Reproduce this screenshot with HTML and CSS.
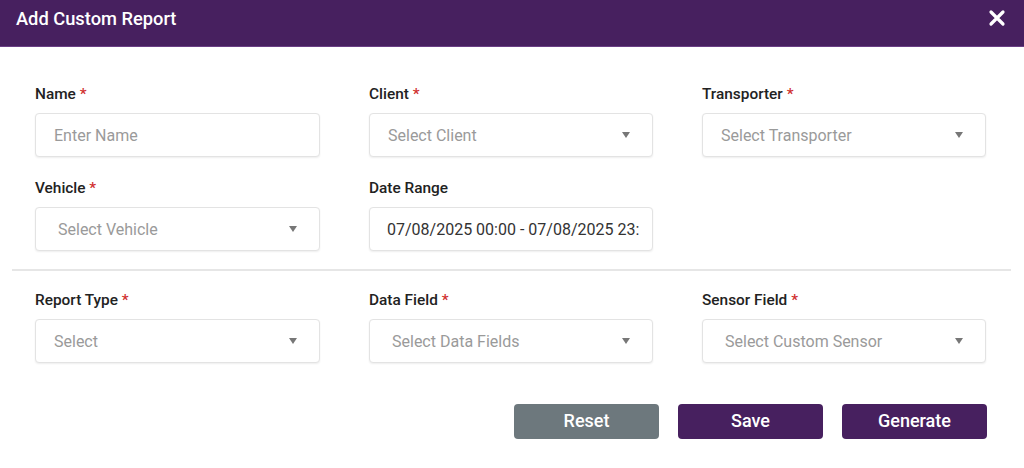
FILE: index.html
```html
<!DOCTYPE html>
<html>
<head>
<meta charset="utf-8">
<link rel="stylesheet" href="styles.css">
</head>
<body>
<div class="modal">
  <div class="modal-header">
    <span class="modal-title">Add Custom Report</span>
    <svg class="close" width="18" height="18" viewBox="0 0 18 18"><path d="M3 3L15 15M15 3L3 15" stroke="#fff" stroke-width="3.2" stroke-linecap="round"/></svg>
  </div>
  <div class="modal-body">
    <div class="grid">
      <div class="field">
        <label class="lbl">Name <span class="req">*</span></label>
        <div class="input"><span class="ph">Enter Name</span></div>
      </div>
      <div class="field">
        <label class="lbl">Client <span class="req">*</span></label>
        <div class="input select"><span class="ph">Select Client</span><span class="caret"></span></div>
      </div>
      <div class="field">
        <label class="lbl">Transporter <span class="req">*</span></label>
        <div class="input select"><span class="ph">Select Transporter</span><span class="caret"></span></div>
      </div>
      <div class="field">
        <label class="lbl">Vehicle <span class="req">*</span></label>
        <div class="input select wide-pad"><span class="ph">Select Vehicle</span><span class="caret"></span></div>
      </div>
      <div class="field">
        <label class="lbl">Date Range</label>
        <div class="input date"><span class="val">07/08/2025 00:00 - 07/08/2025 23:</span></div>
      </div>
    </div>
    <div class="divider"></div>
    <div class="grid">
      <div class="field">
        <label class="lbl">Report Type <span class="req">*</span></label>
        <div class="input select"><span class="ph">Select</span><span class="caret"></span></div>
      </div>
      <div class="field">
        <label class="lbl">Data Field <span class="req">*</span></label>
        <div class="input select wide-pad"><span class="ph">Select Data Fields</span><span class="caret"></span></div>
      </div>
      <div class="field">
        <label class="lbl">Sensor Field <span class="req">*</span></label>
        <div class="input select wide-pad"><span class="ph">Select Custom Sensor</span><span class="caret"></span></div>
      </div>
    </div>
    <div class="actions">
      <button class="btn btn-gray">Reset</button>
      <button class="btn btn-purple">Save</button>
      <button class="btn btn-purple">Generate</button>
    </div>
  </div>
</div>
</body>
</html>
```
FILE: styles.css
```css
* { box-sizing: border-box; }
html, body { margin: 0; padding: 0; background: #fff; }
body { font-family: Roboto, "Liberation Sans", Arial, sans-serif; width: 1024px; height: 468px; overflow: hidden; }
.modal { width: 1024px; }
.modal-header {
  height: 47px;
  background: #47205f;
  border-bottom: 1px solid #6a3f85;
  display: flex;
  align-items: center;
  justify-content: space-between;
  padding: 0 18px 0 16px;
}
.modal-title { color: #fff; font-size: 18.3px; font-weight: 500; line-height: 1; margin-top: -8px; }
.close { margin-top: -10px; }
.modal-body { padding: 38px 37px 0 35px; }
.grid {
  display: grid;
  grid-template-columns: 285px 284px 284px;
  column-gap: 49px;
  row-gap: 22px;
}
.field { display: flex; flex-direction: column; }
.lbl {
  font-size: 15.4px;
  font-weight: 500;
  color: #222;
  line-height: 18px;
  height: 18px;
  margin-bottom: 10px;
}
.req { color: #d0302f; }
.input {
  height: 44px;
  border: 1px solid #e3e3e3;
  border-radius: 4px;
  box-shadow: 0 1px 2px rgba(0,0,0,0.07);
  display: flex;
  align-items: center;
  padding: 0 18px;
  background: #fff;
  overflow: hidden;
  white-space: nowrap;
}
.select { justify-content: space-between; padding-right: 22px; }
.wide-pad { padding-left: 22px; }
.date { padding-left: 17px; padding-right: 4px; }
.ph { color: #9a9a9a; font-size: 16px; }
.val { color: #333; font-size: 16px; }
.caret {
  width: 0; height: 0;
  border-left: 4px solid transparent;
  border-right: 4px solid transparent;
  border-top: 6px solid #777;
}
.divider {
  height: 2px;
  background: #e6e6e6;
  margin: 18px -24px 20px -23px;
}
.actions {
  display: flex;
  justify-content: flex-end;
  gap: 19px;
  margin-top: 41px;
}
.btn {
  width: 145px;
  height: 35px;
  border: none;
  border-radius: 4px;
  color: #fff;
  font-family: Roboto, "Liberation Sans", Arial, sans-serif;
  font-size: 18px;
  font-weight: 500;
  padding: 0;
  padding-bottom: 2px;
}
.btn-gray { background: #6d787d; }
.btn-purple { background: #47205f; }
```
